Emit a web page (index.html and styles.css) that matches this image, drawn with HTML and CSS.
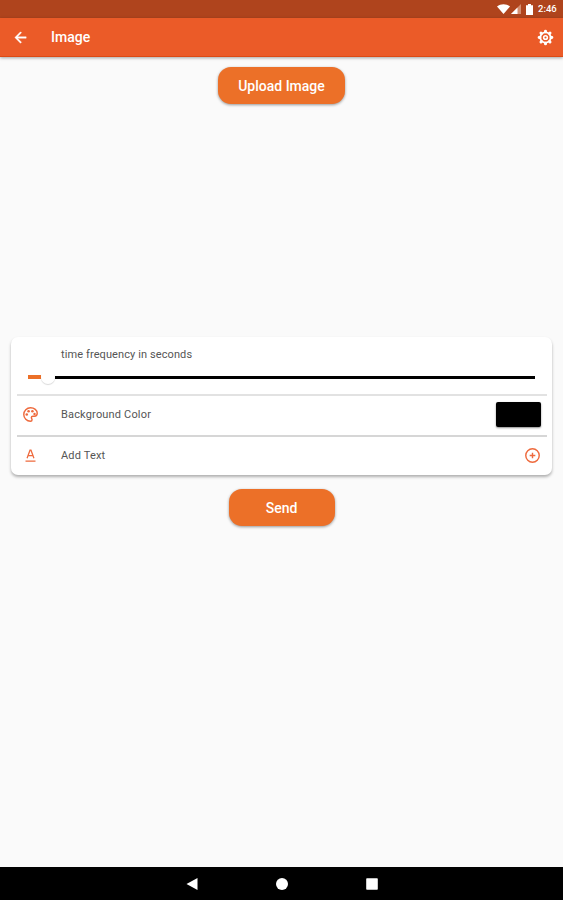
FILE: index.html
```html
<!DOCTYPE html>
<html lang="en">

<head>
  <meta charset="UTF-8">
  <title>Image</title>
  <link rel="stylesheet" href="styles.css">
</head>

<body>
  <!-- Status Bar -->
  <div class="status-bar">
    <svg class="wifi" viewBox="0 0 13 10"><path d="M0 2.4C3.8-.6 9.200-.6 13 2.400L6.500 10z" fill="#fff"/></svg>
    <svg class="signal" viewBox="0 0 10 10"><path d="M10 0v10H0z" fill="#d58e70"/><path d="M6.500 3.500V10H0z" fill="#fff"/></svg>
    <svg class="battery" viewBox="0 0 7 11"><path d="M2 0h3v1.200h2V11H0V1.200h2z" fill="#fff"/></svg>
    <span class="clock">2:46</span>
  </div>

  <!-- App Bar -->
  <div class="app-bar">
    <svg class="back" viewBox="0 0 24 24"><path d="M20 11H7.830l5.590-5.590L12 4l-8 8 8 8 1.410-1.410L7.830 13H20z" fill="#fff" stroke="#fff" stroke-width=".6"/></svg>
    <h1>Image</h1>
    <svg class="settings" viewBox="0 0 24 24" fill="none" stroke="#fff">
      <circle cx="12" cy="12" r="7.300" stroke-width="2.600"/>
      <path d="M12 4V3M12 21v-1M4 12H3M21 12h-1M6.300 6.300l-.7-.7M18.400 18.400l-.7-.7M6.300 17.700l-.7.7M18.400 5.600l-.7.7" stroke-width="4.200" stroke-linecap="round"/>
      <circle cx="12" cy="12" r="2.600" stroke-width="2.200"/>
    </svg>
  </div>

  <div class="content">
    <button class="button upload" type="button">Upload Image</button>

    <!-- Options card -->
    <div class="card">
      <div class="frequency">
        <label>time frequency in seconds</label>
        <div class="slider">
          <span class="filled"></span>
          <span class="thumb"></span>
          <span class="track"></span>
        </div>
      </div>

      <div class="row">
        <svg class="palette" viewBox="0 0 24 24">
          <path d="M12 2.500a9.500 9.500 0 1 0 0 19c1.500 0 2.200-1.100 2.200-2.100 0-1.500-1-1.800-1-3 0-1.100.9-1.900 2-1.900h2.300c2.400 0 4-1.600 4-4.100 0-4.400-4.200-7.900-9.500-7.900z" fill="none" stroke="#ee6a3d" stroke-width="2"/>
          <g fill="#ee6a3d"><circle cx="6.700" cy="12" r="1.800"/><circle cx="9.300" cy="7.500" r="1.800"/><circle cx="14.700" cy="7.500" r="1.800"/><circle cx="17.700" cy="11.200" r="1.700"/></g>
        </svg>
        <span>Background Color</span>
        <div class="swatch"></div>
      </div>

      <div class="row last">
        <svg class="text-icon" viewBox="0 0 24 24"><path d="M4 21h16M6.500 16.500l4.700-13h1.600l4.700 13M8.400 12h7.200" fill="none" stroke="#ee6a3d" stroke-width="2"/></svg>
        <span>Add Text</span>
        <svg class="add" viewBox="0 0 24 24"><path d="M12 8v8M8 12h8" stroke="#ee6a3d" stroke-width="2"/><circle cx="12" cy="12" r="9.500" fill="none" stroke="#ee6a3d" stroke-width="2"/></svg>
      </div>
    </div>

    <button class="button send" type="button">Send</button>
  </div>

  <!-- System navigation -->
  <div class="nav-bar">
    <svg viewBox="0 0 12 12"><path d="M11.500 0v12L.5 6z" fill="#fff"/></svg>
    <svg viewBox="0 0 12 12"><circle cx="6" cy="6" r="6" fill="#fff"/></svg>
    <svg viewBox="0 0 12 12"><rect x=".2" y=".2" width="11.600" height="11.600" rx=".8" fill="#fff"/></svg>
  </div>
</body>

</html>
```
FILE: styles.css
```css
/* Global Styles */
* {
  box-sizing: border-box;
}

body {
  margin: 0;
  height: 900px;
  display: flex;
  flex-direction: column;
  background-color: #FAFAFA;
  font-family: Roboto, sans-serif;
  overflow: hidden;
}

svg {
  display: block;
  flex-shrink: 0;
}

/* Status Bar CSS */
.status-bar {
  height: 18px;
  padding: 0 5px 0 0;
  display: flex;
  align-items: center;
  justify-content: flex-end;
  background-color: #AF441D;
  color: #FFFFFF;
}

.wifi {
  width: 13px;
  height: 10px;
  margin-right: 1px;
}

.signal {
  width: 10px;
  height: 10px;
  margin-right: 5px;
}

.battery {
  width: 7px;
  height: 11px;
  margin-right: 5px;
}

.clock {
  width: 20px;
  font-size: 9.5px;
  font-weight: 500;
  line-height: 18px;
  white-space: nowrap;
}

/* App Bar CSS */
.app-bar {
  height: 39px;
  padding: 0 9px 0 12px;
  display: flex;
  align-items: center;
  background-color: #EB5B28;
  border-bottom: 1px solid #DC4A14;
  box-shadow: 0 1px 3px rgba(0, 0, 0, 0.35);
}

.back {
  width: 17px;
  height: 17px;
}

.app-bar h1 {
  flex: 1;
  margin: 0 0 0 22px;
  color: #FFFFFF;
  font-size: 14px;
  font-weight: 500;
  line-height: 20px;
}

.settings {
  width: 17px;
  height: 17px;
}

/* Content CSS */
.content {
  flex: 1;
  padding: 10px 11px 0;
  display: flex;
  flex-direction: column;
  align-items: center;
}

.button {
  height: 37px;
  padding: 0;
  border: none;
  border-radius: 13px;
  background-color: #EC7028;
  box-shadow: 0 1px 3px rgba(0, 0, 0, 0.4);
  color: #FFFFFF;
  font-family: inherit;
  font-size: 14px;
  font-weight: 500;
  cursor: pointer;
}

.upload {
  width: 127px;
}

.send {
  width: 106px;
  margin-top: 14px;
}

/* Card CSS */
.card {
  width: 541px;
  height: 138px;
  margin-top: 233px;
  padding: 0 5px 0 6px;
  background-color: #FFFFFF;
  border-radius: 7px;
  box-shadow: 0 2px 3px rgba(0, 0, 0, 0.3);
  color: #555555;
  font-size: 11px;
}

.frequency {
  height: 59px;
  padding: 11px 11px 0;
  border-bottom: 2px solid #E2E2E2;
}

.frequency label {
  display: block;
  margin-left: 33px;
  line-height: 14px;
  letter-spacing: 0.1px;
}

.slider {
  height: 14px;
  margin-top: 8px;
  display: flex;
  align-items: center;
}

.filled {
  width: 13px;
  height: 4px;
  background-color: #EC7028;
}

.thumb {
  width: 14px;
  height: 14px;
  border-radius: 50%;
  background-color: #FFFFFF;
  box-shadow: 0 1px 1px rgba(0, 0, 0, 0.15);
}

.track {
  width: 480px;
  height: 3px;
  background-color: #000000;
}

.row {
  height: 41px;
  padding: 0 6px 3px 5px;
  display: flex;
  align-items: center;
  border-bottom: 2px solid #D6D6D6;
}

.row span {
  flex: 1;
  letter-spacing: 0.17px;
}

.palette {
  width: 17px;
  height: 17px;
  margin-right: 22px;
}

.swatch {
  width: 45px;
  height: 25px;
  border-radius: 2px;
  background-color: #000000;
  box-shadow: 0 1px 2px rgba(0, 0, 0, 0.45);
}

.last {
  height: 38px;
  padding-bottom: 2px;
  border-bottom: none;
}

.text-icon {
  width: 15px;
  height: 15px;
  margin: 0 23px 0 1px;
}

.add {
  width: 17px;
  height: 17px;
}

/* Navigation CSS */
.nav-bar {
  height: 33px;
  display: flex;
  align-items: center;
  justify-content: center;
  gap: 78px;
  background-color: #000000;
}

.nav-bar svg {
  width: 12px;
  height: 12px;
}
```
